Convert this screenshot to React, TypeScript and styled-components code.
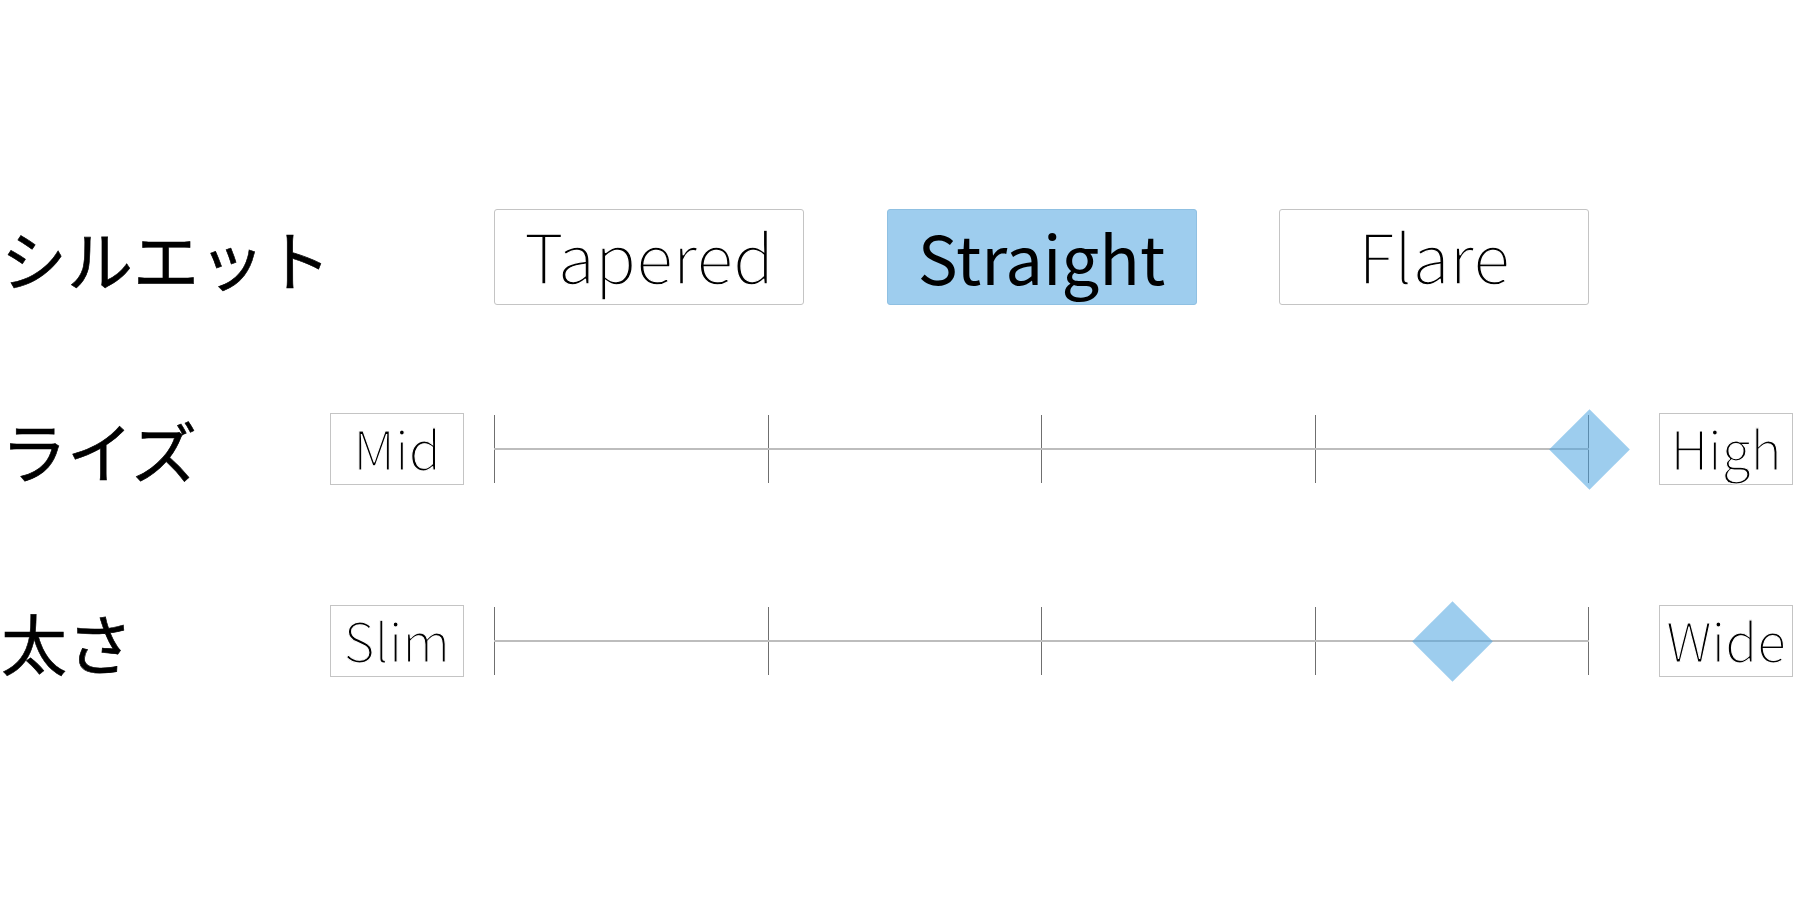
import React from "react";
import styled, { createGlobalStyle } from "styled-components";

const Global = createGlobalStyle`
  html, body {
    margin: 0;
    padding: 0;
    background: #ffffff;
  }
  body {
    font-family: "Noto Sans CJK JP", "Noto Sans", sans-serif;
    color: #000;
  }
`;

const Page = styled.div`
  width: 1800px;
  height: 900px;
  box-sizing: border-box;
  padding-top: 209px;
  display: flex;
  flex-direction: column;
  gap: 96px;
`;

const Row = styled.div`
  display: grid;
  grid-template-columns: 330px 134px 30px 1095px 70px 134px;
  height: 96px;
  align-items: center;
`;

const Label = styled.div`
  grid-column: 1;
  font-family: "Noto Sans CJK JP", sans-serif;
  font-weight: 400;
  font-size: 66px;
  line-height: 1;
  padding-left: 1px;
  white-space: nowrap;
  -webkit-text-stroke: 0.6px #000;
`;

const Choices = styled.div`
  grid-column: 4;
  display: flex;
  justify-content: space-between;
  height: 96px;
`;

const Choice = styled.div<{ $active?: boolean }>`
  width: 310px;
  height: 96px;
  box-sizing: border-box;
  border-radius: 3px;
  border: 1px solid ${(p) => (p.$active ? "#8fc0e2" : "#c4c4c4")};
  background: ${(p) => (p.$active ? "#9ecdee" : "#ffffff")};
  display: flex;
  align-items: center;
  justify-content: center;
  font-family: "Noto Sans CJK JP", sans-serif;
  font-size: ${(p) => (p.$active ? "67px" : "68px")};
  font-weight: ${(p) => (p.$active ? 400 : 300)};
  line-height: 1;
  padding-bottom: 4px;
  -webkit-text-stroke: ${(p) => (p.$active ? "0" : "1.3px #ffffff")};
`;

const SideBox = styled.div<{ $right?: boolean }>`
  grid-column: ${(p) => (p.$right ? 6 : 2)};
  width: 134px;
  height: 72px;
  box-sizing: border-box;
  border: 1px solid #c4c4c4;
  display: flex;
  align-items: center;
  justify-content: center;
  font-family: "Noto Sans CJK JP", sans-serif;
  font-weight: 300;
  font-size: 53px;
  line-height: 1;
  padding-bottom: 3px;
  -webkit-text-stroke: 1.1px #ffffff;
`;

const Track = styled.div`
  grid-column: 4;
  position: relative;
  height: 68px;
  display: flex;
  justify-content: space-between;
  align-items: stretch;
`;

const Line = styled.div`
  position: absolute;
  left: 0;
  right: 0;
  top: 33px;
  height: 2px;
  background: #bdbdbd;
`;

const Tick = styled.div`
  width: 1px;
  background: #6f6f6f;
`;

const Thumb = styled.div`
  position: absolute;
  top: 34px;
  width: 57px;
  height: 57px;
  margin-left: -28.5px;
  margin-top: -28.5px;
  background: rgba(77, 164, 224, 0.55);
  transform: rotate(45deg);
`;

type SliderProps = { label: string; left: string; right: string; value: number };

const Slider: React.FC<SliderProps> = ({ label, left, right, value }) => (
  <Row>
    <Label>{label}</Label>
    <SideBox>{left}</SideBox>
    <Track>
      {[0, 1, 2, 3, 4].map((i) => (
        <Tick key={i} />
      ))}
      <Line />
      <Thumb style={{ left: `${value * 100}%` }} />
    </Track>
    <SideBox $right>{right}</SideBox>
  </Row>
);

export default function App() {
  return (
    <>
      <Global />
      <Page>
        <Row>
          <Label>シルエット</Label>
          <Choices>
            <Choice>Tapered</Choice>
            <Choice $active>Straight</Choice>
            <Choice>Flare</Choice>
          </Choices>
        </Row>
        <Slider label="ライズ" left="Mid" right="High" value={1} />
        <Slider label="太さ" left="Slim" right="Wide" value={0.875} />
      </Page>
    </>
  );
}
